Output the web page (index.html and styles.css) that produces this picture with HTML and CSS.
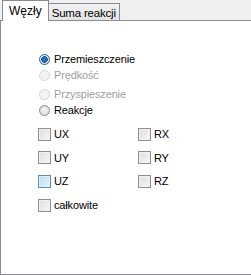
FILE: index.html
```html
<!DOCTYPE html>
<html>
<head>
<meta charset="utf-8">
<link rel="stylesheet" href="styles.css">
</head>
<body>
<div class="tabs">
  <div class="strip">
    <div class="tab active">Węzły</div>
    <div class="tab">Suma reakcji</div>
  </div>
  <div class="panel">
    <div class="radios">
      <div class="opt"><span class="radio checked"></span><span>Przemieszczenie</span></div>
      <div class="opt disabled"><span class="radio"></span><span>Prędkość</span></div>
      <div class="opt disabled gap"><span class="radio"></span><span>Przyspieszenie</span></div>
      <div class="opt"><span class="radio"></span><span>Reakcje</span></div>
    </div>
    <div class="checks">
      <div class="opt"><span class="box"></span><span>UX</span></div>
      <div class="opt"><span class="box"></span><span>RX</span></div>
      <div class="opt"><span class="box"></span><span>UY</span></div>
      <div class="opt"><span class="box"></span><span>RY</span></div>
      <div class="opt"><span class="box hover"></span><span>UZ</span></div>
      <div class="opt"><span class="box"></span><span>RZ</span></div>
    </div>
    <div class="opt total"><span class="box"></span><span>całkowite</span></div>
  </div>
</div>
</body>
</html>
```
FILE: styles.css
```css
html, body { margin: 0; padding: 0; }
body {
  width: 251px; height: 275px;
  background: #f0f0f0;
  font-family: "Liberation Sans", Arial, sans-serif;
  font-size: 11px;
  color: #000;
  overflow: hidden;
}
.tabs { display: flex; flex-direction: column; height: 275px; }
.strip { display: flex; align-items: flex-end; height: 20px; padding-left: 2px; position: relative; z-index: 1; }
.tab {
  height: 17px; box-sizing: border-box;
  border: 1px solid #898c95; border-bottom: none;
  background: linear-gradient(#f2f2f2, #e3e3e3);
  padding: 2px 3px 0 3px;
  line-height: 14px;
  font-size: 11.5px;
  letter-spacing: -0.2px;
}
.tab.active {
  height: 21px; margin-bottom: -1px;
  background: #fff;
  padding: 3px 6px 0 6px;
  font-size: 12px;
  letter-spacing: 0;
  margin-right: -1px;
}
.panel {
  flex: 1;
  background: #fff;
  border: 1px solid #898c95;
  border-right: none;
  padding: 30px 0 0 37px;
}
.opt { display: flex; align-items: center; gap: 3px; height: 16px; line-height: 16px; letter-spacing: -0.15px; }
.radios .opt.disabled { color: #a0a0a0; }
.radios .opt.gap { margin-top: 3px; }
.radio {
  width: 11px; height: 11px; border-radius: 50%; box-sizing: border-box;
  border: 1px solid #8a8a8a;
  background: radial-gradient(circle at 50% 50%, #f4f4f4, #d8d8d8);
  margin-left: 1px; margin-right: 1px;
}
.disabled .radio { border-color: #d6d6d6; background: #f3f3f3; }
.radio.checked {
  border-color: #2c5f94;
  background: radial-gradient(circle, #1d70c8 0 2.5px, #0c4a8c 3px, #dfe6ee 3.6px, #eef2f6 100%);
}
.checks {
  display: grid; grid-template-columns: 100px 80px; row-gap: 7.5px;
  margin-top: 8px;
}
.box {
  width: 13px; height: 13px; box-sizing: border-box;
  border: 1px solid #8e8f8f;
  background: linear-gradient(135deg, #dcdcdc, #f8f8f8);
  box-shadow: inset 0 0 0 1px #f0f0f0;
}
.box.hover {
  border-color: #5a8fb7;
  background: linear-gradient(135deg, #b9dcf5, #e8f4fc);
  box-shadow: inset 0 0 0 1px #dff0fb;
}
.total { margin-top: 8px; }
```
